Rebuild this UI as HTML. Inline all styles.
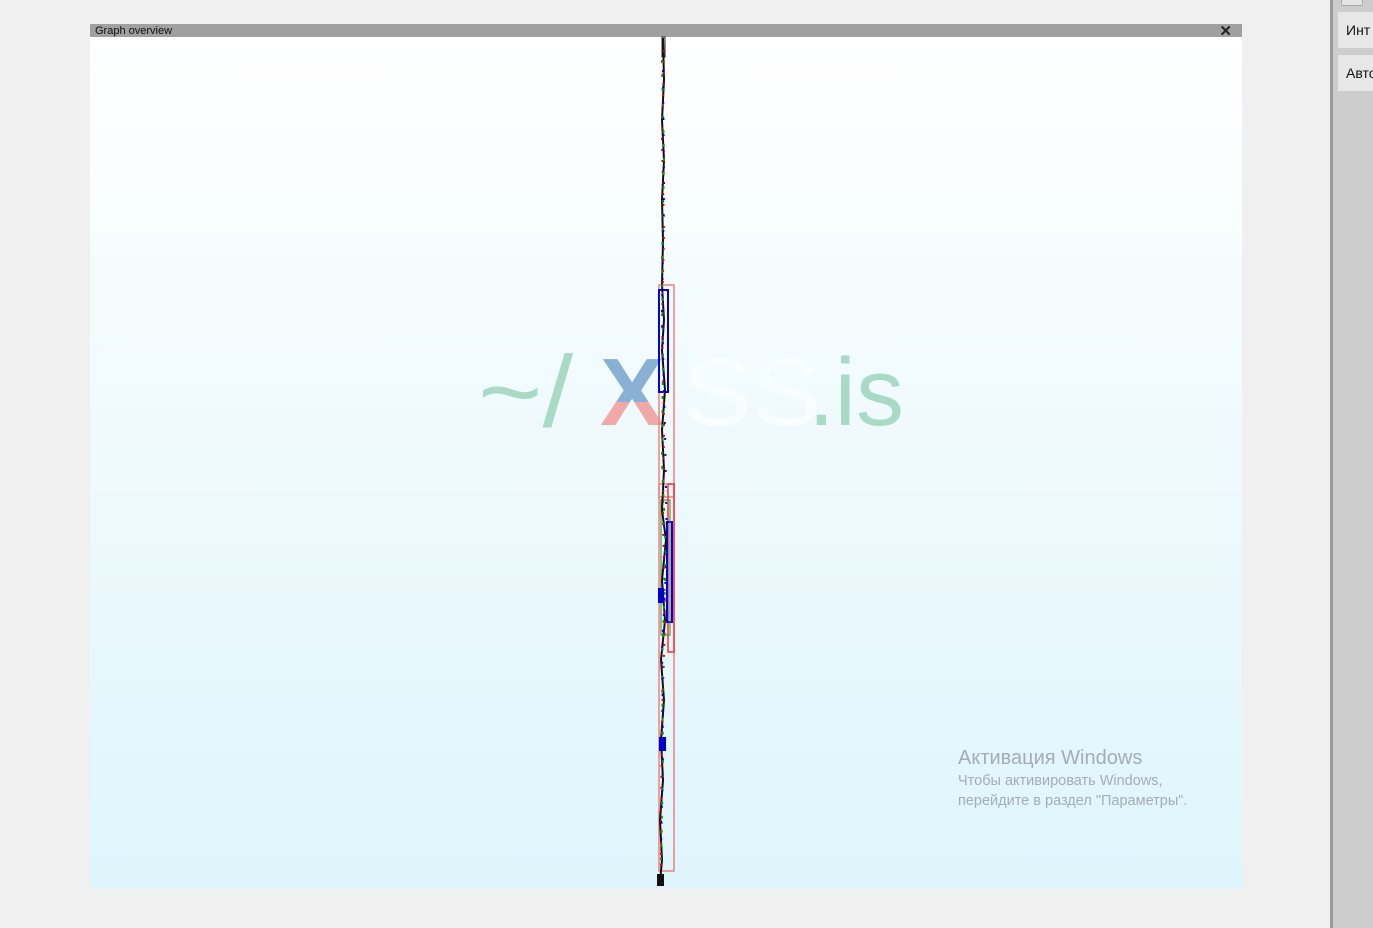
<!DOCTYPE html>
<html><head><meta charset="utf-8"><style>
html,body{margin:0;padding:0;width:1373px;height:928px;overflow:hidden;background:#f0f0f0;font-family:"Liberation Sans",sans-serif;}
.win{position:absolute;left:90px;top:24px;width:1152px;height:864px;}
.bar{position:absolute;left:0;top:0;width:1152px;height:13px;background:#a0a0a0;}
.bar span{position:absolute;left:5px;top:0;font-size:11px;line-height:14px;color:#111;}
.bar b{position:absolute;right:10px;top:-2px;font-size:15px;color:#222;}
.canvas{position:absolute;left:0;top:13px;width:1152px;height:851px;background:linear-gradient(#ffffff,#def5fb);}
.side{position:absolute;left:1330px;top:0;width:43px;height:928px;background:#cdcdcd;border-left:3px solid #9a9a9a;box-sizing:border-box;}
.btn{position:absolute;left:5px;width:40px;height:36px;background:#e7e7e7;font-size:14px;line-height:36px;padding-left:8px;color:#111;}
.wm1{position:absolute;left:958px;top:747px;font-size:20px;color:#a4adb2;}
.wm2{position:absolute;left:958px;top:771px;font-size:14.5px;line-height:20px;color:#a4adb2;}
.logo{position:absolute;left:478px;top:338px;font-size:96px;white-space:nowrap;}
.x{position:absolute;left:122px;top:0;font-weight:bold;color:transparent;background:linear-gradient(#8ab0d4 0,#8ab0d4 58%,#f0a8a8 58%);-webkit-background-clip:text;background-clip:text;}
</style></head><body>
<div class="win">
<div class="bar"><span>Graph overview</span><b>✕</b></div>
<div class="canvas"></div>
</div>
<div class="logo">
<span style="position:absolute;left:0;top:0;color:#a9dac5;transform:scale(1.15,1.05);transform-origin:left center">~/</span>
<span class="x">X</span>
<span style="position:absolute;left:205px;top:0;color:#f8fdfe;transform:scale(1.08,1);transform-origin:left">SS</span>
<span style="position:absolute;left:330px;top:0;color:#a9dac5">.is</span>
</div>
<svg style="position:absolute;left:0;top:0" width="1373" height="928">
<rect x="659" y="285" width="15" height="212" fill="none" stroke="#f08080" stroke-width="1.5"/>
<rect x="659" y="484" width="15" height="387" fill="none" stroke="#f08080" stroke-width="1.5"/>
<rect x="668" y="484" width="6" height="168" fill="none" stroke="#ff3030" stroke-width="1.5"/>
<rect x="659" y="290" width="9" height="102" fill="none" stroke="#0000ee" stroke-width="2"/>
<rect x="667" y="522" width="5" height="100" fill="none" stroke="#0000ee" stroke-width="2"/>
<rect x="661" y="500" width="9" height="135" fill="none" stroke="#2e8b2e" stroke-width="1.5" opacity=".7"/>
<polyline fill="none" stroke="#111" stroke-width="2" points="663,38 664,80 662,120 664,160 662,200 663,240 662,285 664,320 662,350 665,390 662,430 664,470 662,510 666,540 662,580 665,620 661,660 664,700 661,740 663,780 660,820 662,860 660,882"/>
<polyline fill="none" stroke="#d00" stroke-width="2" stroke-dasharray="2 9" points="664,50 662,140 664,230 662,320 664,420 663,520 665,620 662,720 661,820 661,875"/>
<polyline fill="none" stroke="#1a8a1a" stroke-width="2" stroke-dasharray="3 11" points="662,60 664,160 662,260 663,360 662,460 666,560 662,660 663,760 661,860"/>
<polyline fill="none" stroke="#00d" stroke-width="2" stroke-dasharray="2 14" points="663,70 664,190 662,310 665,430 667,550 662,650 663,750 661,850"/>
<rect x="658" y="588" width="6" height="15" fill="#00c"/>
<rect x="659" y="737" width="7" height="14" fill="#00c"/>
<rect x="657" y="874" width="7" height="12" fill="#111"/>
<rect x="662" y="37" width="3" height="20" fill="none" stroke="#222" stroke-width="1"/>
</svg>
<div class="wm1">Активация Windows</div>
<div class="wm2">Чтобы активировать Windows,<br>перейдите в раздел "Параметры".</div>
<div class="side">
<div style="position:absolute;left:8px;top:-6px;width:20px;height:10px;background:#e5e5e5;border:1px solid #aaa;border-radius:2px"></div>
<div class="btn" style="top:12px">Инт</div>
<div class="btn" style="top:55px">Авто</div>
</div>
</body></html>
